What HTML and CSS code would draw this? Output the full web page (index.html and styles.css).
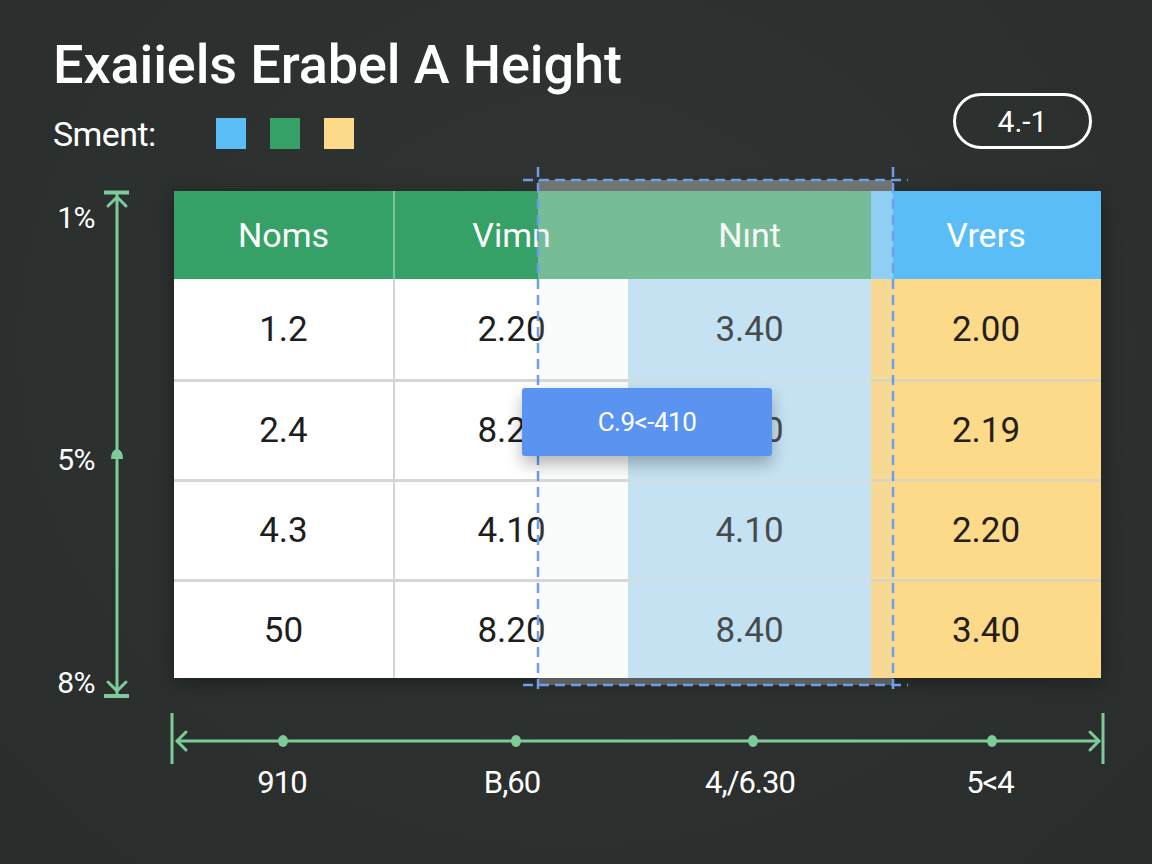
FILE: index.html
```html
<!DOCTYPE html>
<html lang="en">
<head>
<meta charset="utf-8">
<title>Exaiiels Erabel A Height</title>
<link rel="stylesheet" href="styles.css">
</head>
<body>
<main class="page">
  <header class="top">
    <h1 class="title">Exaiiels Erabel A Height</h1>
    <div class="legend-row">
      <div class="legend">
        <span class="legend-label">Sment:</span>
        <span class="sw sw-blue"></span>
        <span class="sw sw-green"></span>
        <span class="sw sw-yellow"></span>
      </div>
      <div class="badge">4.-1</div>
    </div>
  </header>

  <section class="chart">
    <svg class="y-axis" width="174" height="487" viewBox="0 0 174 487">
      <g stroke="#7ecb9a" stroke-width="3" fill="none" stroke-linecap="round" stroke-linejoin="round">
        <line x1="117" y1="2" x2="117" y2="504"/>
        <line x1="104" y1="1.5" x2="129" y2="1.5" stroke-linecap="butt" stroke-width="4"/>
        <line x1="104" y1="505" x2="129" y2="505" stroke-linecap="butt" stroke-width="4"/>
        <polyline points="108,15 117,6 126,15"/>
        <polyline points="108,491 117,500 126,491"/>
      </g>
      <path d="M111 268 Q111 259 117 258 Q123 259 123 268 Z" fill="#7ecb9a"/>
      <g class="y-label">
        <text x="95" y="26">1%</text>
        <text x="95" y="268">5%</text>
        <text x="95" y="491">8%</text>
      </g>
    </svg>

    <div class="table-wrap">
      <div class="table">
        <div class="cell head c1">Noms</div>
        <div class="cell head c2">Vimn</div>
        <div class="cell head c3">Nınt</div>
        <div class="cell head c4">Vrers</div>

        <div class="cell c1">1.2</div>
        <div class="cell c2">2.20</div>
        <div class="cell c3">3.40</div>
        <div class="cell c4">2.00</div>

        <div class="cell c1 rule">2.4</div>
        <div class="cell c2 rule">8.20</div>
        <div class="cell c3 rule">4.10</div>
        <div class="cell c4 rule">2.19</div>

        <div class="cell c1 rule">4.3</div>
        <div class="cell c2 rule">4.10</div>
        <div class="cell c3 rule">4.10</div>
        <div class="cell c4 rule">2.20</div>

        <div class="cell c1 rule">50</div>
        <div class="cell c2 rule">8.20</div>
        <div class="cell c3 rule">8.40</div>
        <div class="cell c4 rule">3.40</div>
      </div>

      <svg class="selection" width="385" height="524" viewBox="0 0 385 524">
        <rect x="15" y="13" width="355" height="99" fill="rgba(236,238,238,0.36)"/>
        <rect x="15" y="112" width="355" height="399" fill="rgba(215,218,218,0.12)"/>
        <rect x="15" y="511" width="355" height="7" fill="rgba(236,238,238,0.28)"/>
        <g stroke="#6d9eeb" stroke-width="2.5" stroke-dasharray="10 6" fill="none">
          <line x1="15" y1="0" x2="15" y2="524"/>
          <line x1="370" y1="0" x2="370" y2="524"/>
          <line x1="0" y1="13" x2="385" y2="13"/>
          <line x1="0" y1="518" x2="385" y2="518"/>
        </g>
      </svg>

      <div class="tip">C.9&lt;-410</div>
    </div>
  </section>

  <svg class="x-axis" width="955" height="100" viewBox="0 0 955 100">
    <g stroke="#7ecb9a" stroke-width="3" fill="none" stroke-linecap="round" stroke-linejoin="round">
      <line x1="17" y1="37" x2="939" y2="37"/>
      <line x1="12" y1="9" x2="12" y2="60" stroke-linecap="butt"/>
      <line x1="943" y1="9" x2="943" y2="60" stroke-linecap="butt"/>
      <polyline points="26,28 17,37 26,46"/>
      <polyline points="930,28 939,37 930,46"/>
    </g>
    <g fill="#7ecb9a">
      <ellipse cx="123" cy="37" rx="5" ry="6"/>
      <ellipse cx="356" cy="37" rx="5" ry="6"/>
      <ellipse cx="593" cy="37" rx="5" ry="6"/>
      <ellipse cx="832" cy="37" rx="5" ry="6"/>
    </g>
    <g class="x-label">
      <text x="122" y="78">910</text>
      <text x="352" y="78">B,60</text>
      <text x="590" y="78">4,/6.30</text>
      <text x="830" y="78">5&lt;4</text>
    </g>
  </svg>
</main>
</body>
</html>
```

FILE: styles.css
```css
html, body {
  margin: 0;
  padding: 0;
  background: #2c302f;
}

body {
  width: 1152px;
  height: 864px;
  overflow: hidden;
  font-family: Roboto, "Liberation Sans", Arial, sans-serif;
  color: #ffffff;
}

.page {
  display: flex;
  flex-direction: column;
  padding-top: 37px;
  background: radial-gradient(ellipse at 50% 40%, #313534 0%, #2c302f 55%, #292d2c 100%);
  height: 827px;
}

.top {
  display: flex;
  flex-direction: column;
  padding: 0 60px 0 53px;
}

.title {
  margin: 0;
  font-size: 54px;
  line-height: 56px;
  font-weight: 500;
  letter-spacing: -0.1px;
  color: #ffffff;
}

.legend-row {
  display: flex;
  justify-content: space-between;
  align-items: flex-end;
}

.legend {
  display: flex;
  align-items: center;
  gap: 24px;
}

.legend-label {
  min-width: 139px;
  font-size: 34px;
  line-height: 30px;
  letter-spacing: -0.6px;
}

.sw {
  width: 30px;
  height: 31px;
  display: block;
}

.sw-blue { background: #5bbdf5; }
.sw-green { background: #35a166; }
.sw-yellow { background: #fdd98a; }

.badge {
  width: 139px;
  height: 56px;
  box-sizing: border-box;
  border: 3px solid #ffffff;
  border-radius: 28px;
  display: flex;
  align-items: center;
  justify-content: center;
  font-size: 30px;
}

.chart {
  display: grid;
  grid-template-columns: 174px 927px;
  margin-top: 42px;
}

.y-axis {
  overflow: visible;
  display: block;
}

.y-label text {
  fill: #ffffff;
  font-size: 30px;
  text-anchor: end;
  dominant-baseline: central;
  letter-spacing: -0.5px;
  font-family: Roboto, "Liberation Sans", sans-serif;
}

.table-wrap {
  position: relative;
  width: 927px;
  height: 487px;
}

.table {
  display: grid;
  grid-template-columns: 221px 233px 243px 230px;
  grid-template-rows: 88px 100px 100px 100px 99px;
  box-shadow: 0 4px 18px rgba(0, 0, 0, 0.35);
}

.cell {
  box-sizing: border-box;
  display: flex;
  align-items: center;
  justify-content: center;
  font-size: 35px;
  font-weight: 400;
  color: #1e1e1e;
  background: #ffffff;
}

.cell.c1 { border-right: 2px solid #d4d4d4; }
.cell.c3 { background: #c3e3f5; color: #33383b; }
.cell.c4 { background: #fdd98a; color: #222018; }

.cell.rule { border-top: 3px solid #d6d6d6; }
.cell.c3.rule { border-top-color: #d2dee6; }
.cell.c4.rule { border-top-color: #e0d3b6; }

.cell.head {
  background: #35a166;
  color: #ffffff;
  font-size: 34px;
  font-weight: 400;
}

.cell.head.c1 { border-right-color: rgba(255, 255, 255, 0.35); }
.cell.head.c4 { background: #5bbdf7; }

.selection {
  position: absolute;
  left: 349px;
  top: -24px;
  overflow: visible;
}

.tip {
  position: absolute;
  left: 348px;
  top: 197px;
  width: 250px;
  height: 68px;
  background: #5b94f0;
  border-radius: 3px;
  box-shadow: 0 8px 16px rgba(0, 0, 0, 0.28);
  display: flex;
  align-items: center;
  justify-content: center;
  font-size: 26px;
  color: #ffffff;
  letter-spacing: -0.5px;
}

.x-axis {
  display: block;
  margin-top: 26px;
  margin-left: 160px;
}

.x-label text {
  fill: #ffffff;
  font-size: 31px;
  text-anchor: middle;
  dominant-baseline: central;
  letter-spacing: -1px;
  font-family: Roboto, "Liberation Sans", sans-serif;
}
```
